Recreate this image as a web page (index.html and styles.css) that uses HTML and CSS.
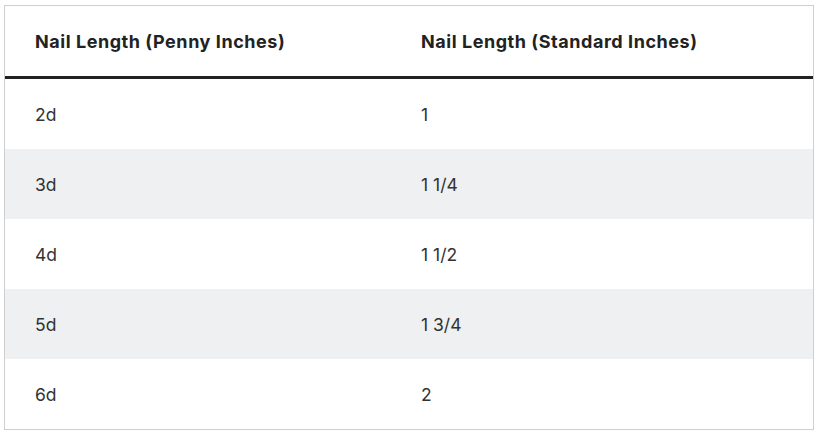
FILE: index.html
```html
<!DOCTYPE html>
<html>
<head>
<meta charset="utf-8">
<link rel="stylesheet" href="styles.css">
</head>
<body>
<table class="nail-table">
  <colgroup><col class="c1"><col class="c2"></colgroup>
  <thead>
    <tr><th>Nail Length (Penny Inches)</th><th>Nail Length (Standard Inches)</th></tr>
  </thead>
  <tbody>
    <tr><td>2d</td><td>1</td></tr>
    <tr class="alt"><td>3d</td><td>1 1/4</td></tr>
    <tr><td>4d</td><td>1 1/2</td></tr>
    <tr class="alt"><td>5d</td><td>1 3/4</td></tr>
    <tr><td>6d</td><td>2</td></tr>
  </tbody>
</table>
</body>
</html>
```
FILE: styles.css
```css
html, body { margin: 0; padding: 0; background: #fff; }
body { padding: 5px 0 0 4px; }
.nail-table {
  border-collapse: separate;
  border-spacing: 0;
  width: 810px;
  border: 1px solid #cfcfcf;
  table-layout: fixed;
  font-family: "Inter", "Liberation Sans", sans-serif;
}
.c1 { width: 386px; }
.c2 { width: 422px; }
.nail-table th {
  height: 73px;
  padding: 0 0 0 30px;
  text-align: left;
  font-size: 18px;
  font-weight: 700;
  letter-spacing: 0.55px;
  color: #222;
  border-bottom: 3px solid #222;
  box-sizing: border-box;
  vertical-align: middle;
}
.nail-table td {
  height: 70px;
  padding: 0 0 0 30px;
  font-size: 17.5px;
  color: #333;
  vertical-align: middle;
  box-sizing: border-box;
}
.nail-table tr.alt td { background: #eff0f1; }
```
